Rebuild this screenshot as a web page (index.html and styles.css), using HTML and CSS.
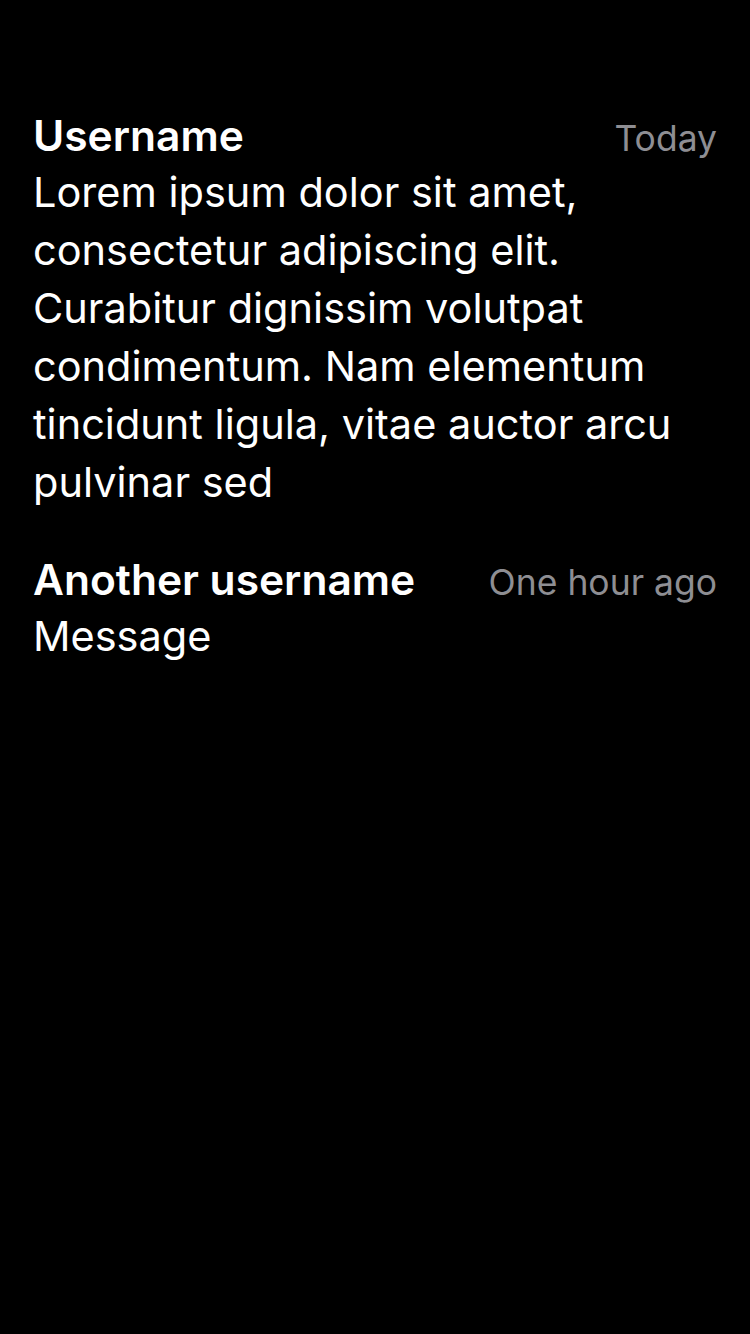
FILE: index.html
```html
<!DOCTYPE html>
<html>
<head>
<meta charset="utf-8">
<link rel="stylesheet" href="styles.css">
</head>
<body>
<div class="list">
  <div class="item">
    <div class="head">
      <span class="name">Username</span>
      <span class="time">Today</span>
    </div>
    <div class="msg">Lorem ipsum dolor sit amet, consectetur adipiscing elit. Curabitur dignissim volutpat condimentum. Nam elementum tincidunt ligula, vitae auctor arcu pulvinar sed</div>
  </div>
  <div class="item">
    <div class="head">
      <span class="name">Another username</span>
      <span class="time">One hour ago</span>
    </div>
    <div class="msg">Message</div>
  </div>
</div>
</body>
</html>
```
FILE: styles.css
```css
html, body {
  margin: 0;
  padding: 0;
  background: #000;
  height: 100%;
}
body {
  font-family: Inter, "Noto Sans", sans-serif;
  color: #fff;
}
.list {
  padding: 109px 33px 0 33px;
  display: flex;
  flex-direction: column;
  gap: 42px;
}
.head {
  display: flex;
  justify-content: space-between;
  align-items: baseline;
  height: 54px;
}
.name {
  font-size: 42.5px;
  font-weight: 600;
  line-height: 54px;
}
.time {
  font-size: 35.5px;
  color: #8e8e93;
  line-height: 54px;
}
.msg {
  font-size: 41.5px;
  line-height: 58px;
}
```
